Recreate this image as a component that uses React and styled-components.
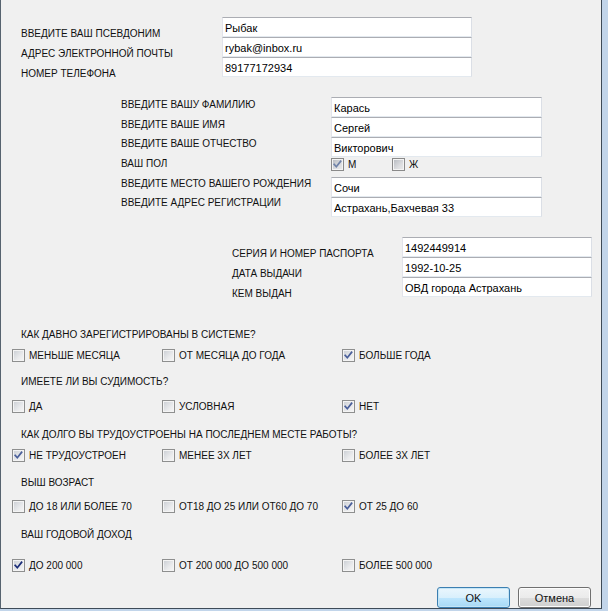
import React from 'react';
import styled, { createGlobalStyle } from 'styled-components';

const Global = createGlobalStyle`
  html, body { margin: 0; padding: 0; background: #c2d5ea; }
  body { font-family: "Liberation Sans", Arial, sans-serif; }
`;

const Frame = styled.div`
  width: 608px;
  height: 611px;
  background: #c2d5ea;
  overflow: hidden;
`;

const Panel = styled.div`
  box-sizing: border-box;
  width: 602px;
  height: 609px;
  background: #f0f0f0;
  border-left: 1px solid #56636f;
  border-right: 1px solid #3e4b58;
  border-bottom: 1px solid #3e4b58;
  display: flex;
  flex-direction: column;
  padding-top: 17px;
`;

const FieldGrid = styled.div`
  display: grid;
  grid-template-columns: ${p => p.$labelW}px ${p => p.$inputW}px;
  grid-auto-rows: 20px;
  margin-left: ${p => p.$left}px;
  margin-top: ${p => p.$top || 0}px;
`;

const FieldLabel = styled.div`
  font-size: 10px;
  line-height: 12px;
  padding-top: ${p => p.$drop}px;
  color: #111;
  white-space: nowrap;
`;

const TextBox = styled.input`
  box-sizing: border-box;
  width: 100%;
  height: 20px;
  margin: 0;
  border: 1px solid;
  border-color: #abadb3 #dbdfe6 #e3e9ef #e2e3ea;
  background: #fff;
  font: 11px "Liberation Sans", Arial, sans-serif;
  color: #000;
  padding: 1px 2px 0;
  outline: none;
`;

const GenderCell = styled.div`
  display: flex;
  align-items: flex-start;
  padding-top: 1px;
`;

const GenderItem = styled.label`
  display: flex;
  align-items: center;
  gap: 4px;
  width: 61px;
  font-size: 10px;
  line-height: 13px;
  color: #111;
`;

const QuestionLabel = styled.div`
  font-size: 10px;
  line-height: 12px;
  margin-left: 20px;
  margin-top: ${p => p.$top}px;
  color: #111;
  white-space: nowrap;
`;

const OptionRow = styled.div`
  display: grid;
  grid-template-columns: 150px 180px 1fr;
  align-items: center;
  height: 16px;
  margin-left: 11px;
  margin-top: ${p => p.$top}px;
`;

const Option = styled.label`
  display: flex;
  align-items: center;
  gap: 4px;
  font-size: 10px;
  line-height: 13px;
  color: #111;
  white-space: nowrap;
`;

const BoxShell = styled.span`
  box-sizing: border-box;
  width: 13px;
  height: 13px;
  flex: none;
  border: 1px solid ${p => (p.$muted ? '#8a8a8a' : '#8e8f8f')};
  background: ${p =>
    p.$muted
      ? 'linear-gradient(135deg, #b4b8be 0%, #dcdde0 60%, #ececec 100%)'
      : 'linear-gradient(135deg, #c9cdd3 0%, #e9eaec 60%, #f7f7f7 100%)'};
  box-shadow: inset 0 0 0 1px #f4f4f4;
  display: inline-flex;
`;

const CheckSvg = styled.svg`
  width: 11px;
  height: 11px;
  display: block;
`;

function CheckBox({ checked, muted, strong }) {
  const color = strong ? '#1b2d78' : muted ? '#6f82a8' : '#4a5f9a';
  return (
    <BoxShell $muted={muted}>
      {checked && (
        <CheckSvg viewBox="0 0 11 11">
          <path d="M2.2 5.4 L4.3 7.7 L8.6 2.3" fill="none" stroke={color} strokeWidth="1.7" strokeLinejoin="miter" strokeLinecap="square" />
        </CheckSvg>
      )}
    </BoxShell>
  );
}

const ButtonBar = styled.div`
  display: flex;
  justify-content: flex-end;
  gap: 8px;
  padding-right: 10px;
  margin-top: 14px;
`;

const Button = styled.button`
  box-sizing: border-box;
  width: 73px;
  height: 21px;
  margin: 0;
  padding: 0;
  border-radius: 3px;
  font-family: "Liberation Sans", Arial, sans-serif;
  font-size: 11px;
  font-weight: 400;
  color: #111;
  border: 1px solid ${p => (p.$primary ? '#3c7fb1' : '#707070')};
  background: ${p =>
    p.$primary
      ? 'linear-gradient(to bottom, #eaf6fd 0%, #d9f0fc 50%, #bee6fd 51%, #a7d9f5 100%)'
      : 'linear-gradient(to bottom, #f2f2f2 0%, #ebebeb 50%, #dddddd 51%, #cfcfcf 100%)'};
  box-shadow: inset 0 0 0 1px ${p => (p.$primary ? '#c4e5f6' : '#fcfcfc')};
`;

const section1 = [
  ['ВВЕДИТЕ ВАШ ПСЕВДОНИМ', 'Рыбак'],
  ['АДРЕС ЭЛЕКТРОННОЙ ПОЧТЫ', 'rybak@inbox.ru'],
  ['НОМЕР ТЕЛЕФОНА', '89177172934'],
];

const section3 = [
  ['СЕРИЯ И НОМЕР ПАСПОРТА', '1492449914'],
  ['ДАТА ВЫДАЧИ', '1992-10-25'],
  ['КЕМ ВЫДАН', 'ОВД города Астрахань'],
];

const questions = [
  {
    q: 'КАК ДАВНО ЗАРЕГИСТРИРОВАНЫ В СИСТЕМЕ?', qTop: 32, rTop: 6,
    opts: ['МЕНЬШЕ МЕСЯЦА', 'ОТ МЕСЯЦА ДО ГОДА', 'БОЛЬШЕ ГОДА'], checked: 2,
  },
  {
    q: 'ИМЕЕТЕ ЛИ ВЫ СУДИМОСТЬ?', qTop: 13, rTop: 10,
    opts: ['ДА', 'УСЛОВНАЯ', 'НЕТ'], checked: 2,
  },
  {
    q: 'КАК ДОЛГО ВЫ ТРУДОУСТРОЕНЫ НА ПОСЛЕДНЕМ МЕСТЕ РАБОТЫ?', qTop: 15, rTop: 6,
    opts: ['НЕ ТРУДОУСТРОЕН', 'МЕНЕЕ 3Х ЛЕТ', 'БОЛЕЕ 3Х ЛЕТ'], checked: 0,
  },
  {
    q: 'ВЫШ ВОЗРАСТ', qTop: 14, rTop: 9,
    opts: ['ДО 18 ИЛИ БОЛЕЕ 70', 'ОТ18 ДО 25 ИЛИ ОТ60 ДО 70', 'ОТ 25 ДО 60'], checked: 2,
  },
  {
    q: 'ВАШ ГОДОВОЙ ДОХОД', qTop: 15, rTop: 16,
    opts: ['ДО 200 000', 'ОТ 200 000 ДО 500 000', 'БОЛЕЕ 500 000'], checked: 0, strong: true,
  },
];

export default function App() {
  return (
    <Frame>
      <Global />
      <Panel>
        <FieldGrid $left={20} $labelW={201} $inputW={250}>
          {section1.map(([l, v]) => (
            <React.Fragment key={l}>
              <FieldLabel $drop={11}>{l}</FieldLabel>
              <TextBox readOnly defaultValue={v} />
            </React.Fragment>
          ))}
        </FieldGrid>

        <FieldGrid $left={120} $labelW={210} $inputW={211} $top={20}>
          <FieldLabel $drop={2}>ВВЕДИТЕ ВАШУ ФАМИЛИЮ</FieldLabel>
          <TextBox readOnly defaultValue="Карась" />
          <FieldLabel $drop={2}>ВВЕДИТЕ ВАШЕ ИМЯ</FieldLabel>
          <TextBox readOnly defaultValue="Сергей" />
          <FieldLabel $drop={1}>ВВЕДИТЕ ВАШЕ ОТЧЕСТВО</FieldLabel>
          <TextBox readOnly defaultValue="Викторович" />
          <FieldLabel $drop={1}>ВАШ ПОЛ</FieldLabel>
          <GenderCell>
            <GenderItem><CheckBox checked muted />М</GenderItem>
            <GenderItem><CheckBox muted />Ж</GenderItem>
          </GenderCell>
          <FieldLabel $drop={1}>ВВЕДИТЕ МЕСТО ВАШЕГО РОЖДЕНИЯ</FieldLabel>
          <TextBox readOnly defaultValue="Сочи" />
          <FieldLabel $drop={0}>ВВЕДИТЕ АДРЕС РЕГИСТРАЦИИ</FieldLabel>
          <TextBox readOnly defaultValue="Астрахань,Бахчевая 33" />
        </FieldGrid>

        <FieldGrid $left={231} $labelW={170} $inputW={190} $top={20}>
          {section3.map(([l, v]) => (
            <React.Fragment key={l}>
              <FieldLabel $drop={11}>{l}</FieldLabel>
              <TextBox readOnly defaultValue={v} />
            </React.Fragment>
          ))}
        </FieldGrid>

        {questions.map(item => (
          <React.Fragment key={item.q}>
            <QuestionLabel $top={item.qTop}>{item.q}</QuestionLabel>
            <OptionRow $top={item.rTop}>
              {item.opts.map((o, i) => (
                <Option key={o}>
                  <CheckBox checked={i === item.checked} strong={item.strong} />
                  {o}
                </Option>
              ))}
            </OptionRow>
          </React.Fragment>
        ))}

        <ButtonBar>
          <Button $primary>OK</Button>
          <Button>Отмена</Button>
        </ButtonBar>
      </Panel>
    </Frame>
  );
}
